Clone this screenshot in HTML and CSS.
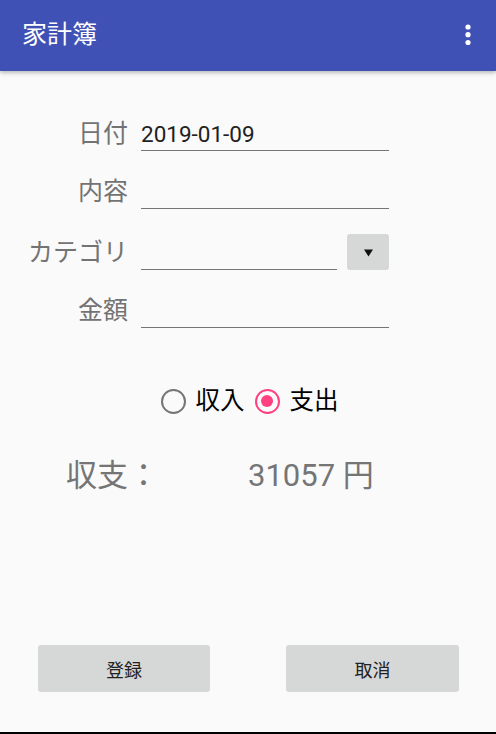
FILE: index.html
```html
<!DOCTYPE html>
<html lang="ja">
<head>
<meta charset="utf-8">
<title>家計簿</title>
<link rel="stylesheet" href="styles.css">
</head>
<body>
<div class="screen">
  <header class="appbar">
    <span class="title">家計簿</span>
    <svg class="menu" width="10" height="26" viewBox="0 0 10 26" aria-hidden="true">
      <circle cx="5" cy="5" r="2.6" fill="#fff"/>
      <circle cx="5" cy="12.7" r="2.6" fill="#fff"/>
      <circle cx="5" cy="20.5" r="2.6" fill="#fff"/>
    </svg>
  </header>

  <main class="content">
    <div class="form">
      <div class="row">
        <span class="label">日付</span>
        <div class="field">2019-01-09</div>
      </div>
      <div class="row">
        <span class="label">内容</span>
        <div class="field"></div>
      </div>
      <div class="row row-cat">
        <span class="label">カテゴリ</span>
        <div class="cat">
          <div class="field field-short"></div>
          <div class="spinner">
            <svg width="9" height="8" viewBox="0 0 9 8" aria-hidden="true"><path d="M0 0.5 H9 L4.5 7.5 Z" fill="#111"/></svg>
          </div>
        </div>
      </div>
      <div class="row">
        <span class="label">金額</span>
        <div class="field"></div>
      </div>
    </div>

    <div class="radios">
      <label class="radio"><span class="circle"></span><span class="rtext">収入</span></label>
      <label class="radio checked"><span class="circle"><span class="dot"></span></span><span class="rtext">支出</span></label>
    </div>

    <div class="balance">
      <span class="bal-label">収支：</span>
      <span class="bal-value">31057 円</span>
    </div>
  </main>

  <div class="buttons">
    <button class="btn">登録</button>
    <button class="btn">取消</button>
  </div>
  <div class="navedge"></div>
</div>
</body>
</html>
```

FILE: styles.css
```css
* { box-sizing: border-box; }
html, body { margin: 0; padding: 0; }
body {
  background: #fafafa;
  font-family: Roboto, "Noto Sans CJK JP", sans-serif;
  color: #212121;
}
.screen {
  height: 734px;
  display: flex;
  flex-direction: column;
}
.appbar {
  height: 71px;
  flex: none;
  background: #3f51b5;
  display: flex;
  align-items: center;
  justify-content: space-between;
  padding: 0 23px 0 22px;
  box-shadow: 0 2px 4px rgba(0,0,0,0.25);
  position: relative;
  z-index: 1;
}
.title {
  color: #fff;
  font-size: 25px;
  line-height: 30px;
  margin-top: -1px;
}
.menu { display: block; margin-top: -1px; }

.content {
  flex: 1;
  display: flex;
  flex-direction: column;
}
.form {
  padding-top: 47px;
  display: flex;
  flex-direction: column;
  gap: 25px;
}
.row {
  display: grid;
  grid-template-columns: 128px 248px;
  column-gap: 13px;
  align-items: end;
}
.label {
  text-align: right;
  font-size: 25px;
  line-height: 32px;
  color: #737373;
  height: 33px;
  white-space: nowrap;
}
.field {
  height: 33px;
  line-height: 32px;
  font-size: 22.5px;
  color: #212121;
  border-bottom: 1px solid #757575;
}
.cat {
  display: flex;
  align-items: flex-end;
}
.field-short { width: 196px; }
.spinner {
  margin-left: 10px;
  width: 42px;
  height: 36px;
  background: #d6d7d7;
  border-radius: 3px;
  display: flex;
  align-items: center;
  justify-content: center;
}
.spinner svg { display: block; margin-top: 2px; }

.radios {
  margin-top: 49px;
  height: 48px;
  display: flex;
  justify-content: center;
  align-items: center;
  gap: 10px;
  padding-left: 3px;
}
.radio {
  display: flex;
  align-items: center;
  gap: 10px;
}
.circle {
  width: 25px;
  height: 25px;
  border-radius: 50%;
  border: 2.6px solid #757575;
  display: flex;
  align-items: center;
  justify-content: center;
}
.checked .circle { border-color: #ff4081; }
.dot {
  width: 12px;
  height: 12px;
  border-radius: 50%;
  background: #ff4081;
}
.rtext {
  font-size: 24.5px;
  line-height: 30px;
  color: #000;
}

.balance {
  margin-top: 31px;
  display: flex;
  align-items: baseline;
  padding-left: 66px;
  color: #757575;
  font-size: 31px;
  line-height: 40px;
}
.bal-label { width: 182px; }

.buttons {
  flex: none;
  display: flex;
  justify-content: space-between;
  padding: 0 37px 40px 38px;
}
.btn {
  width: 172px;
  height: 47px;
  border: none;
  border-radius: 3px;
  background: #d6d7d7;
  font-family: Roboto, "Noto Sans CJK JP", sans-serif;
  font-size: 18px;
  color: #222;
  padding: 0;
}
.btn + .btn { width: 173px; }
.navedge {
  flex: none;
  height: 2px;
  background: #000;
}
```
